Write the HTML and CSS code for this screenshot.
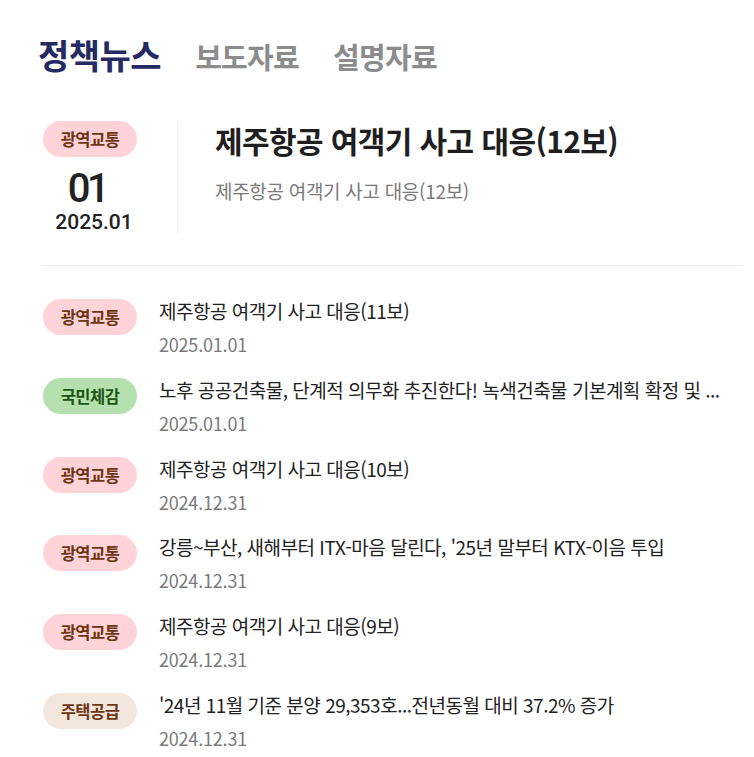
FILE: index.html
```html
<!DOCTYPE html>
<html lang="ko">
<head>
    <meta charset="UTF-8">
    <meta name="viewport" content="width=device-width, initial-scale=1.0">
    <title>정책뉴스</title>
    <link rel="stylesheet" href="styles.css">
</head>
<body>
    <div class="news">
        <div class="tabs">
            <span class="tab active">정책뉴스</span>
            <span class="tab">보도자료</span>
            <span class="tab">설명자료</span>
        </div>

        <div class="featured">
            <div class="featured-date">
                <span class="badge pink">광역교통</span>
                <div class="day">01</div>
                <div class="month">2025.01</div>
            </div>
            <div class="featured-body">
                <div class="featured-title">제주항공 여객기 사고 대응(12보)</div>
                <div class="featured-sub">제주항공 여객기 사고 대응(12보)</div>
            </div>
        </div>

        <ul class="list">
            <li class="item">
                <span class="badge pink">광역교통</span>
                <div class="item-text">
                    <div class="item-title">제주항공 여객기 사고 대응(11보)</div>
                    <div class="item-date">2025.01.01</div>
                </div>
            </li>
            <li class="item">
                <span class="badge green">국민체감</span>
                <div class="item-text">
                    <div class="item-title">노후 공공건축물, 단계적 의무화 추진한다! 녹색건축물 기본계획 확정 및 ...</div>
                    <div class="item-date">2025.01.01</div>
                </div>
            </li>
            <li class="item">
                <span class="badge pink">광역교통</span>
                <div class="item-text">
                    <div class="item-title">제주항공 여객기 사고 대응(10보)</div>
                    <div class="item-date">2024.12.31</div>
                </div>
            </li>
            <li class="item">
                <span class="badge pink">광역교통</span>
                <div class="item-text">
                    <div class="item-title">강릉~부산, 새해부터 ITX-마음 달린다, '25년 말부터 KTX-이음 투입</div>
                    <div class="item-date">2024.12.31</div>
                </div>
            </li>
            <li class="item">
                <span class="badge pink">광역교통</span>
                <div class="item-text">
                    <div class="item-title">제주항공 여객기 사고 대응(9보)</div>
                    <div class="item-date">2024.12.31</div>
                </div>
            </li>
            <li class="item">
                <span class="badge beige">주택공급</span>
                <div class="item-text">
                    <div class="item-title">'24년 11월 기준 분양 29,353호...전년동월 대비 37.2% 증가</div>
                    <div class="item-date">2024.12.31</div>
                </div>
            </li>
        </ul>
    </div>
</body>
</html>
```

FILE: styles.css
```css
body {
    margin: 0;
    background: #fff;
    font-family: "Noto Sans CJK KR", "Noto Sans", sans-serif;
    color: #222;
}

.news {
    width: 700px;
    padding: 35px 0 0 43px;
}

.tabs {
    display: flex;
    align-items: baseline;
    gap: 34px;
    margin-left: -5px;
    margin-bottom: 45px;
}

.tab {
    font-size: 29px;
    line-height: 40px;
    font-weight: 700;
    color: #8c8c8c;
    letter-spacing: -0.7px;
}

.tab.active {
    font-size: 34px;
    color: #252a62;
    letter-spacing: -0.5px;
}

.badge {
    display: flex;
    align-items: center;
    justify-content: center;
    flex: none;
    width: 94px;
    height: 36px;
    border-radius: 18px;
    font-size: 16.5px;
    font-weight: 700;
    letter-spacing: -0.5px;
}

.badge.pink {
    background: #ffd3d8;
    color: #6e3512;
}

.badge.green {
    background: #b4e0ad;
    color: #1c5412;
}

.badge.beige {
    background: #f3e7dd;
    color: #6e3512;
}

.featured {
    display: flex;
    padding-bottom: 31px;
    border-bottom: 1px solid #e9ecef;
}

.featured-date {
    display: flex;
    flex-direction: column;
    align-items: center;
    width: 94px;
}

.day {
    margin-top: 10px;
    margin-right: 6px;
    font-family: Roboto, "Noto Sans", sans-serif;
    font-size: 40px;
    line-height: 44px;
    font-weight: 500;
    letter-spacing: -3.5px;
    color: #222;
}

.month {
    margin-left: 8px;
    font-family: Roboto, "Noto Sans", sans-serif;
    font-size: 21px;
    line-height: 23px;
    font-weight: 500;
    color: #222;
}

.featured-body {
    margin-left: 40px;
    padding-left: 37px;
    border-left: 1px solid #eceef1;
}

.featured-title {
    font-size: 30px;
    line-height: 38px;
    font-weight: 700;
    letter-spacing: -0.6px;
    color: #1f1f1f;
}

.featured-sub {
    margin-top: 20px;
    font-size: 19px;
    line-height: 24px;
    color: #7a7a7a;
    letter-spacing: -0.3px;
}

.list {
    list-style: none;
    margin: 0;
    padding: 33px 0 0;
}

.item {
    display: flex;
    gap: 22px;
    margin-bottom: 22.8px;
}

.item-text {
    min-width: 0;
    flex: 1;
}

.item-title {
    font-size: 19px;
    line-height: 24px;
    color: #222;
    letter-spacing: -0.5px;
    white-space: nowrap;
}

.item-date {
    margin-top: 10px;
    font-size: 18px;
    line-height: 22px;
    color: #7a7a7a;
    letter-spacing: -0.2px;
}
```
